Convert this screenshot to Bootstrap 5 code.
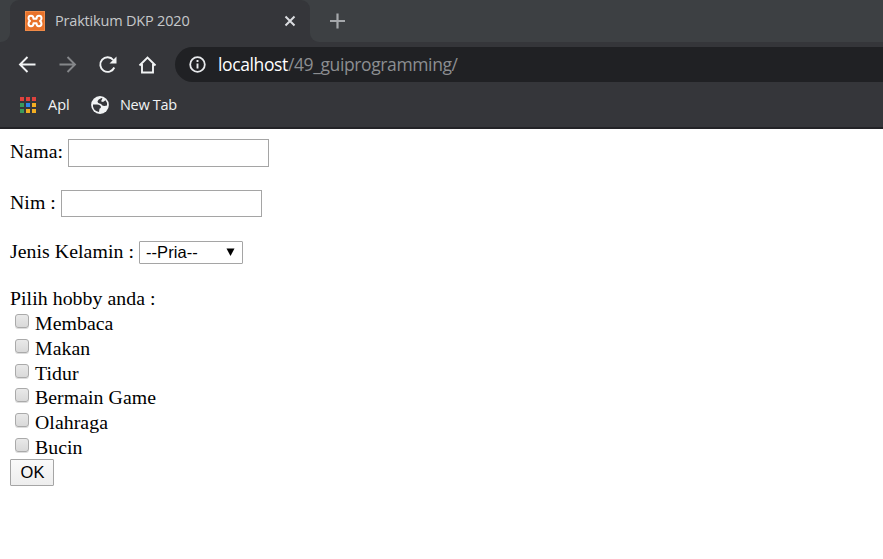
<!DOCTYPE html>
<html lang="id">
<head>
<meta charset="utf-8">
<title>Praktikum DKP 2020</title>
<link href="https://cdn.jsdelivr.net/npm/bootstrap@5.3.0/dist/css/bootstrap.min.css" rel="stylesheet">
<style>
body{height:559px;background:#fff;color:#000}
svg{display:block;flex:none}
.chrome{font-family:"Open Sans","Noto Sans",sans-serif;background:#35363a;height:129px;border-bottom:2px solid #232327}
.strip{height:42px;background:#3d4043}
.edge{width:10px;background:#35363a}
.edge i{display:block;height:42px;background:#3d4043}
.edge.left i{border-bottom-right-radius:9px}
.edge.right i{border-bottom-left-radius:9px}
.tab-active{width:300px;padding-left:15px;background:#35363a;border-radius:9px 9px 0 0;color:#c6c8ca}
.tab-title{font-size:14.5px;margin-left:10px;width:229px;letter-spacing:-.19px}
.plus{margin-left:10px}
.tools{height:45px;padding-left:18px}
.nav-icons{margin-right:-11px}
.address{height:35px;margin-left:18px;padding-left:14px;background:#202124;border-radius:18px 0 0 18px;color:#8c8e91;font-size:17.5px;letter-spacing:-.38px}
.address b{font-weight:400;color:#fff;letter-spacing:-.38px}
.marks{height:35px;padding-left:19px;color:#f1f3f4;font-size:14.5px;letter-spacing:-.3px}
.apl{margin-left:11px;width:43px;letter-spacing:0}
.globe{margin-right:11px}
.page{font:19.8px/25px "Liberation Serif",serif;letter-spacing:.06px;padding:10px 0 0 10px}
.line{height:25px}
.second{margin-top:26px}
.third{margin-top:24px}
.fourth{margin-top:22px}
.entry{width:201px;height:28px;border:1px solid #a5a5a5;background:#fff;margin-left:5px}
.entry.low{height:27px}
.pick{width:104px;height:23px;border:1px solid #a5a5a5;border-radius:1px;background:#fff;font:16.5px/20px "Liberation Sans",sans-serif;margin:2px 0 0 5px;padding:0 7px 1px 6px}
.hobby{height:24.8px}
.box{appearance:none;width:14px;height:14px;border:1px solid #aaa;border-radius:3px;background:linear-gradient(#e9e9e9,#d9d9d9);margin:3px 6px 0 5px;box-shadow:0 1px 0 #ddd}
.okay{width:44px;height:27px;margin-top:-.8px;border:1px solid #a5a5a5;border-radius:1px;background:linear-gradient(#fafafa,#ededed);font:16.5px/24px "Liberation Sans",sans-serif;padding:0 0 0 1px;color:#000}
</style>
<script src="https://cdn.jsdelivr.net/npm/bootstrap@5.3.0/dist/js/bootstrap.bundle.min.js"></script>
</head>
<body class="overflow-hidden">
<header class="chrome">
  <div class="strip d-flex">
    <div class="edge left"><i></i></div>
    <div class="tab-active d-flex align-items-center">
      <svg width="20" height="20" viewBox="0 0 20 20"><rect width="20" height="20" rx="1" fill="#e8722a"/><rect x=".5" y=".5" width="19" height="19" fill="none" stroke="#f08b48"/><path d="M8.500 7.800Q8.500 4.800 6 4.800 3.500 4.800 3.500 7.200 3.500 9.200 5 10 3.500 10.800 3.500 12.800 3.500 15.200 6 15.200 8.500 15.200 8.500 12.200H11.500Q11.500 15.200 14 15.200 16.500 15.200 16.500 12.800 16.500 10.800 15 10 16.500 9.200 16.500 7.200 16.500 4.800 14 4.800 11.500 4.800 11.500 7.800Z" fill="none" stroke="#fff" stroke-width="2" stroke-linejoin="round"/></svg>
      <span class="tab-title text-nowrap">Praktikum DKP 2020</span>
      <svg width="12" height="12" viewBox="0 0 12 12"><path d="M1.500 1.500l9 9m0-9l-9 9" stroke="#dadce0" stroke-width="2"/></svg>
    </div>
    <div class="edge right"><i></i></div>
    <svg class="plus align-self-center" width="15" height="16" viewBox="0 0 15 16"><path d="M7.500.5v15M0 8h15" stroke="#a5a8ab" stroke-width="2.200"/></svg>
  </div>
  <nav class="tools d-flex align-items-center" aria-label="Navigasi">
    <svg class="nav-icons" width="150" height="20" viewBox="18 55 150 20">
      <g fill="none" stroke-width="1.900"><path d="M35.500 64.500H20.500M27.500 57l-7.500 7.500 7.500 7.500" stroke="#f1f3f4"/><path d="M59.500 64.500h15M67.500 57l7.500 7.500-7.500 7.500" stroke="#85878a"/><path d="M113.300 60A7.300 7.300 0 1 0 114.300 67.500" stroke="#f1f3f4"/><path d="M116.500 56.500v7h-7z" fill="#f1f3f4"/><path d="M139.500 65.500L147.500 57.500l8 8M142 64v8.500h11V64" stroke="#f1f3f4"/></g>
    </svg>
    <div class="address flex-grow-1 d-flex align-items-center">
      <svg width="17" height="17" viewBox="0 0 17 17"><circle cx="8.500" cy="8.500" r="7.300" fill="none" stroke="#e8eaed" stroke-width="1.800"/><path d="M8.500 4v2M8.500 7.500v5" stroke="#e8eaed" stroke-width="1.900"/></svg>
      <span class="ms-2 ps-1 text-nowrap"><b>localhost</b>/49_guiprogramming/</span>
    </div>
  </nav>
  <div class="marks d-flex align-items-center">
    <svg width="18" height="18" viewBox="0 0 18 18"><path d="M1 1h4v4H1zM7 1h4v4H7zM13 1h4v4h-4z" fill="#df423d"/><path d="M1 7h4v4H1zM1 13h4v4H1z" fill="#3c9a5b"/><path d="M7 7h4v4H7z" fill="#2e84ea"/><path d="M13 7h4v4h-4zM7 13h4v4H7zM13 13h4v4h-4z" fill="#f3ae22"/></svg>
    <span class="apl">Apl</span>
    <svg class="globe" width="18" height="18" viewBox="0 0 18 18"><circle cx="9" cy="9" r="8.900" fill="#f1f3f4"/><path d="M10.500 2Q7 3.200 6.500 5.200 6.500 7 8.500 7.500 10.500 7.500 11 9.300 13 10.500 16 9.500 16.500 6.500 14.500 4.200L12 6 10 5.200 11.500 2.500ZM2 8.500H6Q9.500 8.500 10 11 10 12.300 8.500 12.800L8 16Q3 15.200 2 10.500Z" fill="#35363a"/></svg>
    <span>New Tab</span>
  </div>
</header>
<main class="page">
  <form>
    <div class="line d-flex"><label for="nama">Nama:</label><input id="nama" class="entry"></div>
    <div class="line d-flex second"><label for="nim">Nim :</label><input id="nim" class="entry low"></div>
    <div class="line d-flex third"><span>Jenis Kelamin :</span><div class="pick d-flex justify-content-between align-items-center" role="combobox" aria-label="Jenis Kelamin"><span>--Pria--</span><svg width="9" height="8" viewBox="0 0 9 8"><path d="M.5.5h8L4.500 8z"/></svg></div></div>
    <div class="line fourth">Pilih hobby anda :</div>
    <label class="hobby d-flex"><input type="checkbox" class="box">Membaca</label>
    <label class="hobby d-flex"><input type="checkbox" class="box">Makan</label>
    <label class="hobby d-flex"><input type="checkbox" class="box">Tidur</label>
    <label class="hobby d-flex"><input type="checkbox" class="box">Bermain Game</label>
    <label class="hobby d-flex"><input type="checkbox" class="box">Olahraga</label>
    <label class="hobby d-flex"><input type="checkbox" class="box">Bucin</label>
    <button type="button" class="okay d-block">OK</button>
  </form>
</main>
</body>
</html>
